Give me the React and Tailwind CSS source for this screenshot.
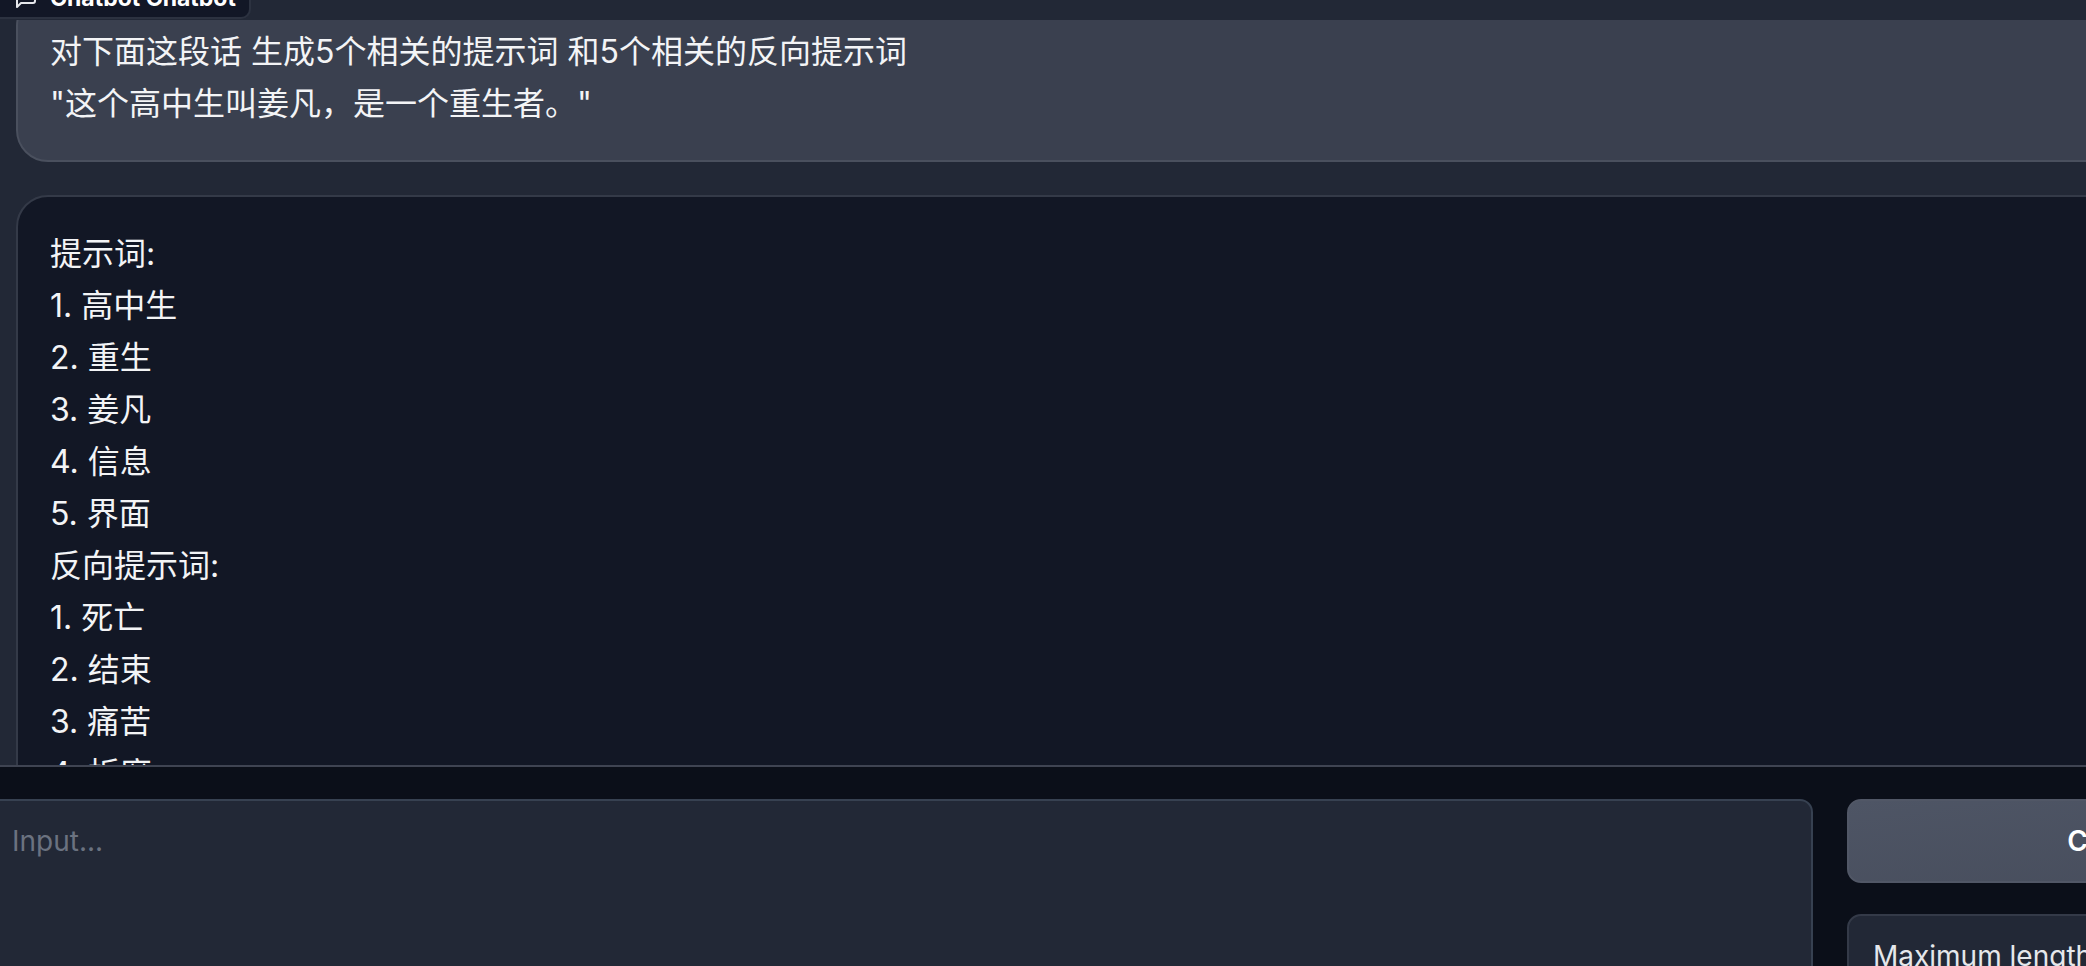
import React from "react";

const userLines = [
  "对下面这段话 生成5个相关的提示词 和5个相关的反向提示词",
  "\"这个高中生叫姜凡，是一个重生者。\"",
];

const botLines = [
  "提示词:",
  "1. 高中生",
  "2. 重生",
  "3. 姜凡",
  "4. 信息",
  "5. 界面",
  "反向提示词:",
  "1. 死亡",
  "2. 结束",
  "3. 痛苦",
  "4. 折磨",
  "5. 失败",
];

export default function App() {
  return (
    <div className="relative h-[966px] w-[2086px] overflow-hidden bg-[#0b0f19] font-['Inter','Noto_Sans_CJK_SC',sans-serif]">
      {/* Chatbot panel */}
      <div className="relative h-[767px] border-b-2 border-[#3f4452] bg-[#222836]">
        {/* block label */}
        <div className="absolute left-0 top-0 z-10 h-[19px] w-[251px] overflow-hidden rounded-br-[10px] border-b-2 border-r-2 border-[#2c3240] bg-[#121726]">
          <div className="mt-[-14px] flex items-start gap-[12px] pl-[14px]">
            <svg width="24" height="24" viewBox="0 0 24 24" fill="none" stroke="#e5e7eb" strokeWidth="2" strokeLinecap="round" strokeLinejoin="round">
              <path d="M21 15a2 2 0 0 1-2 2H7l-4 4V5a2 2 0 0 1 2-2h14a2 2 0 0 1 2 2z" />
            </svg>
            <span className="text-[23px] font-bold leading-[24px] text-white">Chatbot Chatbot</span>
          </div>
        </div>

        <div className="h-full pt-[20px]">
          <div className="h-full overflow-hidden">
            <div className="-mr-[120px] mt-[-26px] flex flex-col gap-[33px] pl-[16px]">
              <div className="rounded-[32px] border-2 border-[#4a505e] bg-[#3a404f] px-[32px] py-[30px] text-[32px] leading-[52px] text-gray-100">
                {userLines.map((l, i) => (
                  <div key={i}>{l}</div>
                ))}
              </div>
              <div className="rounded-[32px] border-2 border-[#343a48] bg-[#121725] px-[32px] pb-[30px] pt-[31px] text-[32px] leading-[52px] text-gray-100">
                {botLines.map((l, i) => (
                  <div key={i}>{l}</div>
                ))}
              </div>
            </div>
          </div>
        </div>
      </div>

      {/* Bottom row */}
      <div className="-ml-[12px] mt-[32px] flex gap-[34px]">
        <textarea
          placeholder="Input..."
          className="h-[240px] w-[1825px] shrink-0 resize-none rounded-[13px] border-2 border-[#374151] bg-[#222836] px-[22px] pt-[19px] text-[28px] leading-[42px] text-gray-100 outline-none placeholder:text-[#6b7280]"
        />
        <div className="flex w-[618px] shrink-0 flex-col gap-[31px]">
          <button className="flex h-[84px] items-center justify-center rounded-[14px] border-2 border-[#515766] bg-gradient-to-br from-[#4e5565] to-[#464c5b] text-[28px] font-semibold text-white">
            Clear History
          </button>
          <div className="h-[120px] rounded-[14px] border-2 border-[#343a48] bg-[#222836] px-[24px] pt-[19px] text-[28px] leading-[42px] text-gray-200">
            Maximum length
          </div>
        </div>
      </div>
    </div>
  );
}
